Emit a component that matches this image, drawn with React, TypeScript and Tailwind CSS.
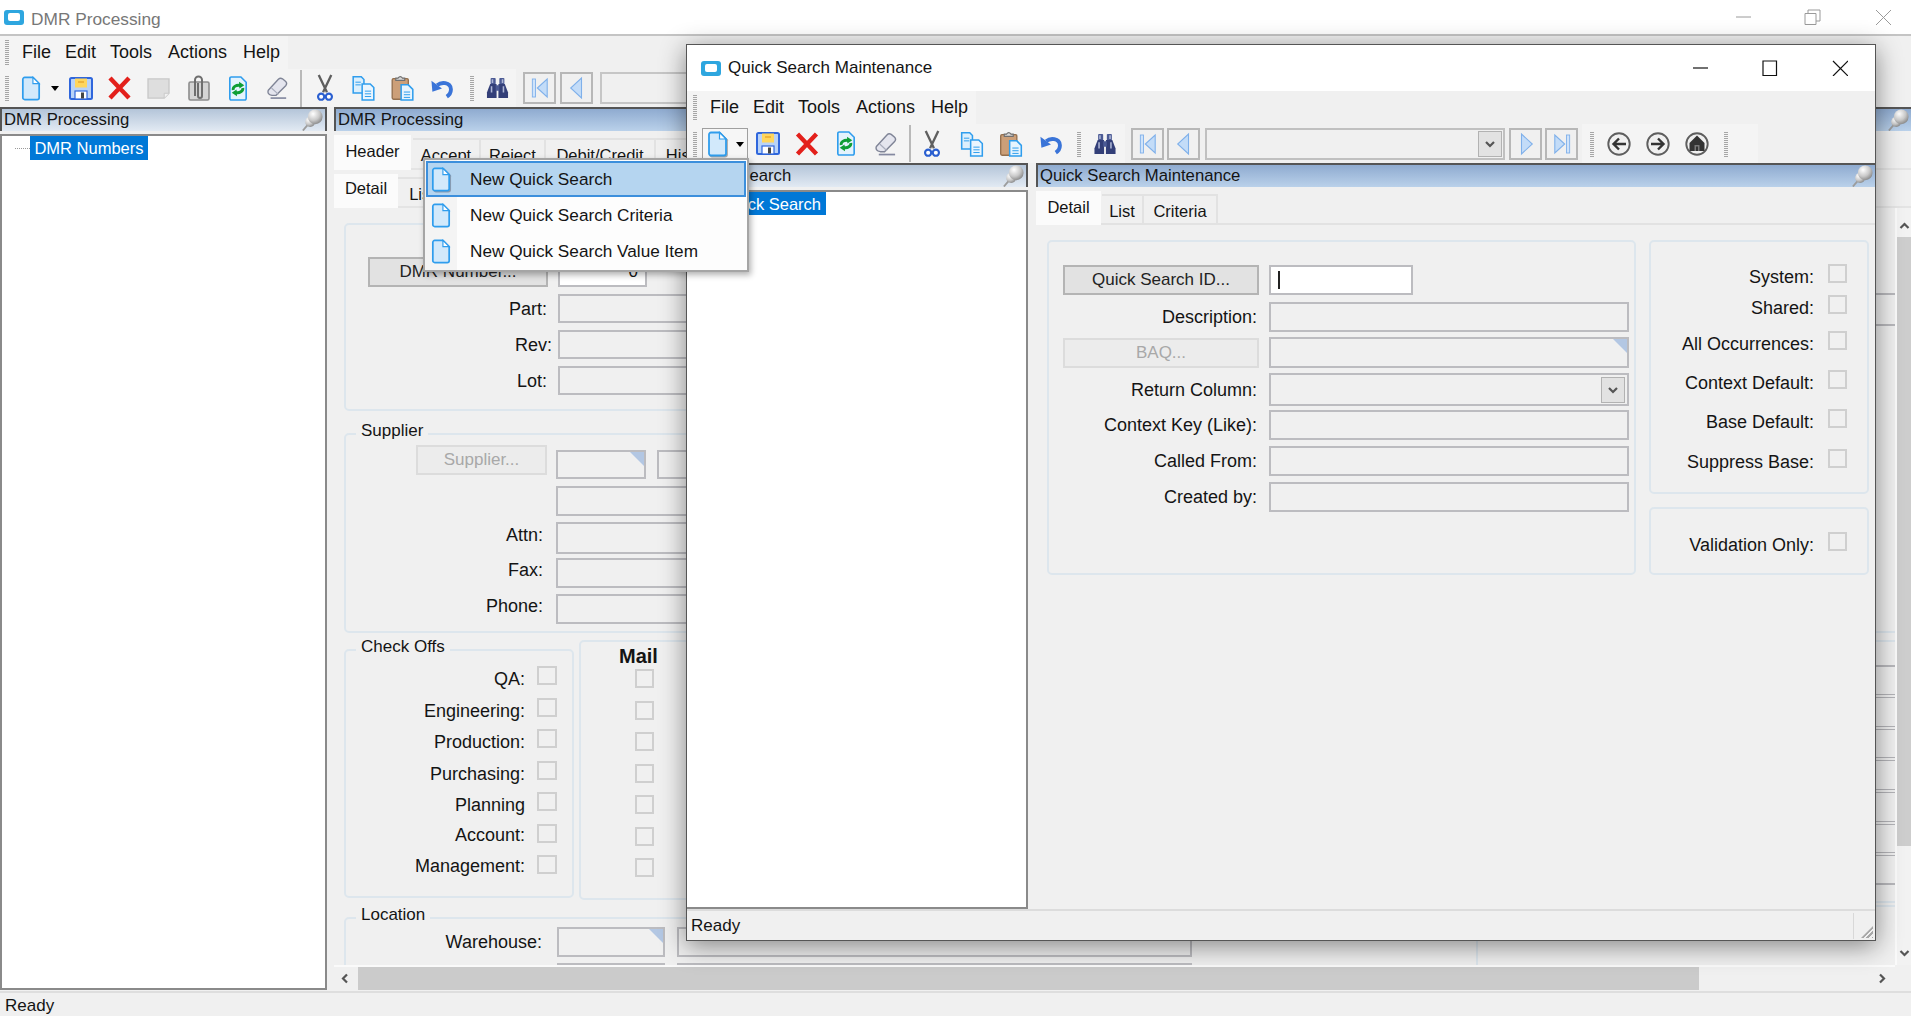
import React from "react";

type C = { className?: string };

const AppIcon = ({ className = "" }: C) => (
  <div className={"flex h-[15px] w-[20px] items-center justify-center rounded-[3px] bg-[#2ea6df] " + className}>
    <div className="h-[8px] w-[12px] rounded-[2px] bg-white" />
  </div>
);

const Doc = ({ className = "" }: C) => (
  <svg viewBox="0 0 20 26" className={className}>
    <path d="M1.500 3.500a2 2 0 0 1 2-2h8.500l6.500 6.500v14.500a2 2 0 0 1-2 2h-13a2 2 0 0 1-2-2z" fill="#d2e9fb" stroke="#2f9ded" strokeWidth="1.800" />
    <path d="M12 1.500V8h6.500z" fill="#fff" stroke="#2f9ded" strokeWidth="1.200" />
  </svg>
);
const Save = ({ className = "" }: C) => (
  <svg viewBox="0 0 24 23" className={className}>
    <rect x="1" y="1" width="22" height="21" rx="1.500" fill="#b9d3f7" stroke="#2f66dc" strokeWidth="2" />
    <rect x="6" y="1.500" width="12" height="9" fill="#ffd65c" />
    <path d="M9 5h6" stroke="#e8a72c" strokeWidth="1.400" />
    <rect x="6" y="14" width="12" height="8" fill="#fff" stroke="#2f66dc" strokeWidth="1.200" />
    <rect x="12" y="15.500" width="3" height="6" fill="#444" />
  </svg>
);
const Del = ({ className = "" }: C) => (
  <svg viewBox="0 0 24 24" className={className}>
    <path d="M2.500 2 21.500 22M21.500 2 2.500 22" stroke="#e3201b" strokeWidth="4.400" fill="none" />
  </svg>
);
const GrayBox = ({ className = "" }: C) => (
  <svg viewBox="0 0 24 22" className={className}>
    <path d="M1 1h22v15l-5 5H1z" fill="#dedede" stroke="#c8c8c8" strokeWidth="1.400" />
    <path d="M23 16h-5v5" fill="#f2f2f2" stroke="#c8c8c8" />
  </svg>
);
const Clip = ({ className = "" }: C) => (
  <svg viewBox="0 0 22 26" className={className}>
    <rect x="1" y="7" width="20" height="18" rx="1.500" fill="#d4d4d4" stroke="#8c8c8c" strokeWidth="1.600" />
    <path d="M7 21V5a3.500 3.500 0 0 1 7 0v16a2 2 0 0 1-4 0V8" fill="none" stroke="#6e6e6e" strokeWidth="2" />
  </svg>
);
const Refresh = ({ className = "" }: C) => (
  <svg viewBox="0 0 20 26" className={className}>
    <path d="M1.500 2.500a1.500 1.500 0 0 1 1.500-1.500h10l5.500 5.500v17a1.500 1.500 0 0 1-1.500 1.500H3a1.500 1.500 0 0 1-1.500-1.500z" fill="#e4f3fd" stroke="#2f9ded" strokeWidth="1.700" />
    <path d="M5 14.500c-.5-3 3.500-6 7.500-4.500" fill="none" stroke="#0f9e35" strokeWidth="3" />
    <path d="M11 6l5.500 3.500-5 3.500z" fill="#0f9e35" />
    <path d="M15 12.500c.5 3-3.500 6-7.500 4.500" fill="none" stroke="#0f9e35" strokeWidth="3" />
    <path d="M9 21l-5.500-3.500 5-3.500z" fill="#0f9e35" />
  </svg>
);
const Eraser = ({ className = "" }: C) => (
  <svg viewBox="0 0 24 25" className={className}>
    <path d="M2.500 15 13.500 3q2-2 4.500-.5l3.500 3q2 2 0 4.500L11 20.500H6.500Q1 19.500 2.500 15z" fill="#e4e5ee" stroke="#7f8496" strokeWidth="1.500" />
    <path d="M6 12.500l7.500 7" stroke="#a8acbc" strokeWidth="1.200" fill="none" />
    <path d="M5 23.500h17" stroke="#8489a0" strokeWidth="1.800" />
  </svg>
);
const Cut = ({ className = "" }: C) => (
  <svg viewBox="0 0 18 29" className={className}>
    <path d="M2.500 1 11 19M15.500 1 7 19" stroke="#5f5f5f" strokeWidth="2.400" fill="none" />
    <circle cx="5" cy="23.500" r="3.200" fill="#fff" stroke="#2a5fd0" strokeWidth="2.200" />
    <circle cx="13" cy="23.500" r="3.200" fill="#fff" stroke="#2a5fd0" strokeWidth="2.200" />
  </svg>
);
const Copy = ({ className = "" }: C) => (
  <svg viewBox="0 0 25 29" className={className}>
    <path d="M1 2h9l3 3v15H1z" fill="#dceffc" stroke="#2f9ded" strokeWidth="1.700" />
    <path d="M11 10h9l4 4v14H11z" fill="#eaf5fe" stroke="#2f9ded" strokeWidth="1.700" />
    <path d="M14 18h7M14 21h7M14 24h7M3.500 8h6M3.500 11h6" stroke="#2f9ded" strokeWidth="1.100" />
  </svg>
);
const Paste = ({ className = "" }: C) => (
  <svg viewBox="0 0 25 29" className={className}>
    <rect x="1" y="4" width="18" height="23" rx="1.500" fill="#cc9f78" stroke="#94704e" strokeWidth="1.500" />
    <path d="M5 6V3.500h2.500q2.500-3.500 5 0H15V6z" fill="#d9d9d9" stroke="#707070" strokeWidth="1.300" />
    <path d="M11 11h8l5 5v12H11z" fill="#e6f4fe" stroke="#2f9ded" strokeWidth="1.700" />
    <path d="M14 19h7M14 22h7M14 25h7" stroke="#2f9ded" strokeWidth="1.100" />
  </svg>
);
const Undo = ({ className = "" }: C) => (
  <svg viewBox="0 0 24 22" className={className}>
    <path d="M17.500 20c6-4 6-12.500-1.500-14-3-.5-6 0-8.500 2" fill="none" stroke="#3a74d8" strokeWidth="4" />
    <path d="M1.500 3.500l1 11.500 10-3.500z" fill="#3a74d8" />
  </svg>
);
const Binoc = ({ className = "" }: C) => (
  <svg viewBox="0 0 24 24" className={className}>
    <rect x="4.500" y="1" width="5.500" height="7" rx="1" fill="#4b5a94" />
    <rect x="14" y="1" width="5.500" height="7" rx="1" fill="#4b5a94" />
    <path d="M4 7.500h7V23H.5v-6z" fill="#333f78" />
    <path d="M20 7.500h-7V23h10.500v-6z" fill="#333f78" />
    <rect x="10" y="9" width="4" height="6" fill="#4b5a94" />
    <path d="M5.500 10v7M18.500 10v7M6.500 2.500v4M17.500 2.500v4" stroke="#aeb7d6" strokeWidth="1.700" />
  </svg>
);
const Tri = ({ dir, bar, className = "" }: C & { dir: "l" | "r"; bar?: boolean }) => (
  <svg viewBox="0 0 20 24" className={className}>
    <g transform={dir === "r" ? "translate(20 0) scale(-1 1)" : undefined}>
      {bar && <rect x="1.500" y="2" width="3.500" height="20" fill="#cfe3fa" stroke="#7fb0ea" strokeWidth="1" />}
      <path d={bar ? "M18 2v20L7 12z" : "M15 1v22L3 12z"} fill="#c3dcf8" stroke="#7fb0ea" strokeWidth="1.200" />
    </g>
  </svg>
);
const Ring = ({ kind, className = "" }: C & { kind: "b" | "f" | "h" }) => (
  <svg viewBox="0 0 24 24" className={className}>
    <circle cx="12" cy="12" r="10.700" fill="#f0f0f0" stroke="#5e5e5e" strokeWidth="1.900" />
    {kind === "b" && <path d="M19 12H7M12 6.500 6.500 12l5.500 5.500" fill="none" stroke="#333" strokeWidth="2.400" />}
    {kind === "f" && <path d="M5 12h12M12 6.500l5.500 5.500-5.500 5.500" fill="none" stroke="#333" strokeWidth="2.400" />}
    {kind === "h" && (
      <>
        <path d="M12 3.500l7.500 7.500v8h-15v-8z" fill="#333" />
        <rect x="9.500" y="13" width="5" height="6" fill="#777" />
        <rect x="11" y="14.500" width="2" height="4.500" fill="#333" />
      </>
    )}
  </svg>
);
const Pin = ({ className = "" }: C) => (
  <svg viewBox="0 0 24 24" className={className}>
    <defs>
      <radialGradient id="pg" cx="0.35" cy="0.3" r="0.8">
        <stop offset="0" stopColor="#ffffff" />
        <stop offset="0.55" stopColor="#c9c9c9" />
        <stop offset="1" stopColor="#7d7d7d" />
      </radialGradient>
    </defs>
    <path d="M1.500 23.500l6-7" stroke="#9c9c9c" strokeWidth="2" />
    <circle cx="9.500" cy="14" r="5.500" fill="url(#pg)" />
    <circle cx="15" cy="8.500" r="8" fill="url(#pg)" />
  </svg>
);
const Chev = ({ d, className = "" }: C & { d: string }) => (
  <svg viewBox="0 0 12 12" className={className}>
    <path d={d} fill="none" stroke="#555" strokeWidth="2.200" />
  </svg>
);

const Grip = ({ className = "" }: C) => (
  <div className={"h-[26px] w-[4px] shrink-0 bg-[repeating-linear-gradient(0deg,#a6a6a6_0_1px,transparent_1px_2px)] " + className} />
);
const Sep = ({ className = "" }: C) => <div className={"h-[37px] w-[2px] shrink-0 bg-[#b9b9b9] " + className} />;
const NavBtn = ({ children, className = "" }: React.PropsWithChildren<C>) => (
  <div className={"flex h-[32px] w-[33px] shrink-0 items-center justify-center border-2 border-[#b7b7b7] bg-[#f0f0f0] " + className}>{children}</div>
);
const Menu = ({ className = "" }: C) => (
  <div className="flex h-[33px] shrink-0 items-center bg-[#f0f0f0]">
    <div className={"flex h-full w-fit items-center bg-[#f4f4f4] pb-[1px] text-[18px] leading-[22px] " + className}>
      <Grip className="ml-[5px]" />
      <span className="ml-[13px]">File</span>
      <span className="ml-[14px]">Edit</span>
      <span className="ml-[14px]">Tools</span>
      <span className="ml-[16px]">Actions</span>
      <span className="ml-[16px] mr-[8px]">Help</span>
    </div>
  </div>
);

const Box = ({ className = "" }: C) => <div className={"h-[19px] w-[19px] shrink-0 border-2 border-[#cfcfcf] bg-[#f0f0f0] " + className} />;
const Corner = () => <div className="absolute right-0 top-0 h-[14px] w-[14px] bg-[#b3c7e3] [clip-path:polygon(0_0,100%_0,100%_100%)]" />;
const Inp = ({ className = "", corner, children, white }: React.PropsWithChildren<C & { corner?: boolean; white?: boolean }>) => (
  <div className={"relative shrink-0 border-2 border-[#bcbcc0] " + (white ? "bg-white " : "bg-[#f0f0f0] ") + className}>
    {corner && <Corner />}
    {children}
  </div>
);
const Btn = ({ className = "", children, disabled }: React.PropsWithChildren<C & { disabled?: boolean }>) => (
  <div
    className={
      "flex shrink-0 items-center justify-center border-2 leading-[20px] " +
      (disabled ? "border-[#dcdcdc] bg-[#ececec] text-[#a8a8a8] " : "border-[#b4b4b4] bg-[#e2e2e2] text-[#222] ") +
      className
    }
  >
    {children}
  </div>
);
const Legend = ({ children }: React.PropsWithChildren) => (
  <span className="absolute left-[10px] top-[-14px] bg-[#f0f0f0] px-[5px] text-[17px] leading-[20px]">{children}</span>
);
const Group = ({ className = "", children }: React.PropsWithChildren<C>) => (
  <div className={"relative shrink-0 rounded-[5px] border-2 border-[#dde6ed] " + className}>{children}</div>
);
const PanelHead = ({ title, strong, className = "", pinClass = "" }: C & { title: string; strong?: boolean; pinClass?: string }) => (
  <div
    className={
      "flex h-[24px] shrink-0 items-center justify-between overflow-hidden border-l-2 border-t-2 border-[#555] pl-[2px] text-[16.700px] leading-[20px] " +
      (strong ? "bg-gradient-to-b from-[#8fabd0] to-[#bad1ea] " : "bg-gradient-to-b from-[#b4c5d9] to-[#e2eaf3] ") +
      className
    }
  >
    <span className="whitespace-nowrap">{title}</span>
    <Pin className={"mr-[1px] h-[22px] w-[23px] shrink-0 " + pinClass} />
  </div>
);
const Tab = ({ label, active, className = "" }: C & { label: string; active?: boolean }) => (
  <div
    className={
      "flex shrink-0 items-center justify-center text-[16.500px] leading-[20px] " +
      (active ? "bg-[#fbfbfb] " : "mt-[3px] border-r-2 border-t-2 border-[#e2e2e2] pt-[1px] ") +
      className
    }
  >
    {label}
  </div>
);

const CheckRow = ({ label, labelClass = "mt-[3px]" }: { label: string; labelClass?: string }) => (
  <div className="flex h-[31.500px] items-start justify-end pr-[15px]">
    <span className={"mr-[12px] text-[18px] leading-[20px] " + labelClass}>{label}</span>
    <Box className="w-[20px]" />
  </div>
);
const LabelRow = ({
  label,
  children,
  className = "",
  labelW = "w-[202px]",
  labelClass = "",
}: React.PropsWithChildren<C & { labelW?: string; labelClass?: string }> & { label: string }) => (
  <div className={"flex items-center " + className}>
    <span className={"shrink-0 text-right text-[18px] leading-[20px] " + labelW + " " + labelClass}>{label}</span>
    {children}
  </div>
);

const QCheck = ({ label, className = "" }: C & { label: string }) => (
  <div className={"flex h-[20px] items-start justify-end pr-[20px] " + className}>
    <span className="mr-[14px] mt-[3px] text-[18px] leading-[20px]">{label}</span>
    <Box />
  </div>
);
const QLabel = ({ children }: React.PropsWithChildren) => (
  <span className="w-[194px] shrink-0 text-right text-[18px] leading-[20px]">{children}</span>
);
const Dbl = ({ className = "" }: C) => <div className={"h-[4px] w-full shrink-0 border-y border-[#b4b4b8] " + className} />;
const One = ({ className = "" }: C) => <div className={"h-[2px] w-full shrink-0 bg-[#b8b8bc] " + className} />;
const BlueLn = ({ className = "" }: C) => <div className={"h-[2px] w-full shrink-0 bg-[#dde6ed] " + className} />;

export default function App() {
  return (
    <div className="relative flex h-[1016px] w-[1911px] flex-col overflow-hidden bg-[#f0f0f0] font-['Liberation_Sans',sans-serif] text-[17px] leading-[20px] text-[#141414]">
      {/* outer title bar */}
      <div className="flex h-[36px] shrink-0 items-center border-b-2 border-[#c4c4c4] bg-white">
        <AppIcon className="ml-[4px]" />
        <span className="ml-[7px] pt-[3px] text-[17.300px] text-[#777]">DMR Processing</span>
        <svg viewBox="0 0 155 16" className="ml-auto mr-[20px] h-[16px] w-[155px]" fill="none" stroke="#9a9a9a" strokeWidth="1">
          <path d="M0 8h15" />
          <path d="M69 4.500h11v11H69zM72 4.500V1h12v11h-4" />
          <path d="M140 1l15 15M155 1l-15 15" />
        </svg>
      </div>
      <Menu />
      {/* outer toolbar */}
      <div className="flex h-[38px] shrink-0 items-center bg-[linear-gradient(90deg,#f4f4f4_0_516px,#f0f0f0_516px)]">
        <Grip className="ml-[5px]" />
        <Doc className="ml-[12px] h-[25px] w-[20px]" />
        <div className="ml-[10px] h-0 w-0 border-x-[4px] border-t-[5px] border-x-transparent border-t-black" />
        <Save className="ml-[10px] h-[23px] w-[24px]" />
        <Del className="ml-[14px] h-[24px] w-[25px]" />
        <GrayBox className="ml-[15px] h-[21px] w-[23px]" />
        <Clip className="ml-[18px] h-[26px] w-[22px]" />
        <Refresh className="ml-[18px] h-[25px] w-[20px]" />
        <Eraser className="ml-[18px] h-[24px] w-[22px]" />
        <Sep className="ml-[12px]" />
        <Cut className="ml-[14px] h-[28px] w-[18px]" />
        <Copy className="ml-[17px] h-[26px] w-[25px]" />
        <Paste className="ml-[14px] h-[26px] w-[25px]" />
        <Undo className="ml-[15px] h-[22px] w-[23px]" />
        <Grip className="ml-[17px]" />
        <Binoc className="ml-[12px] h-[22px] w-[23px]" />
        <NavBtn className="ml-[14px]"><Tri dir="l" bar className="h-[22px] w-[18px]" /></NavBtn>
        <NavBtn className="ml-[4px] w-[32px]"><Tri dir="l" className="h-[24px] w-[18px]" /></NavBtn>
        <div className="ml-[7px] h-[32px] w-[120px] border-2 border-[#c6c6c6]" />
      </div>

      {/* outer main */}
      <div className="flex min-h-0 flex-1">
        <div className="flex w-[327px] shrink-0 flex-col">
          <PanelHead title="DMR Processing" className="border-r-2" />
          <div className="mt-[3px] flex-1 border-x-2 border-y-2 border-[#8a8a8a] bg-white pt-0">
            <div className="flex h-[24px] items-center">
              <div className="ml-[13px] w-[15px] border-t border-dotted border-[#999]" />
              <div className="flex h-[24px] w-[118px] items-center justify-center bg-[#0078d7] text-[16.500px] text-white">DMR Numbers</div>
            </div>
          </div>
        </div>
        <div className="ml-[7px] flex min-w-0 flex-1 flex-col">
          <PanelHead title="DMR Processing" strong pinClass="-mr-[9px]" />
          <div className="mt-[4px] flex h-[35px] shrink-0 border-b-2 border-[#e4e4e4]">
            <Tab label="Header" active className="h-[35px] w-[77px] pb-[4px]" />
            <Tab label="Accept" className="ml-[2px] h-[31px] w-[68px]" />
            <Tab label="Reject" className="h-[31px] w-[65px]" />
            <Tab label="Debit/Credit" className="h-[31px] w-[110px]" />
            <Tab label="History" className="h-[31px] w-[73px]" />
          </div>
          <div className="mt-[4px] flex h-[34px] shrink-0 border-b-2 border-[#e4e4e4]">
            <Tab label="Detail" active className="h-[34px] w-[64px] pb-[6px]" />
            <Tab label="List" className="h-[31px] w-[50px]" />
          </div>
          <div className="flex min-h-0 flex-1">
            {/* form */}
            <div className="flex min-w-0 flex-1 flex-col overflow-hidden pl-[10px]">
              <Group className="mt-[15px] h-[188px] w-[1134px] pl-[22px] pt-[32px]">
                <div className="flex h-[30px] items-center">
                  <Btn className="h-[30px] w-[180px]">DMR Number...</Btn>
                  <Inp white className="ml-[10px] flex h-[30px] w-[89px] items-center justify-end pr-[7px]">0</Inp>
                </div>
                <LabelRow label="Part:" className="mt-[7px]" labelW="w-[179px]"><Inp className="ml-[11px] h-[29px] w-[400px]" /></LabelRow>
                <LabelRow label="Rev:" className="mt-[7px]" labelW="w-[184px]"><Inp className="ml-[6px] h-[29px] w-[400px]" /></LabelRow>
                <LabelRow label="Lot:" className="mt-[7px]" labelW="w-[179px]"><Inp className="ml-[11px] h-[29px] w-[400px]" /></LabelRow>
              </Group>
              <Group className="mt-[22px] h-[200px] w-[1134px] pl-[70px] pt-[10px]">
                <Legend>Supplier</Legend>
                <div className="flex items-start">
                  <Btn disabled className="h-[30px] w-[131px]">Supplier...</Btn>
                  <Inp corner className="ml-[9px] mt-[5px] h-[29px] w-[90px]" />
                  <Inp className="ml-[11px] mt-[5px] h-[29px] w-[300px]" />
                </div>
                <Inp className="ml-[140px] mt-[7px] h-[30px] w-[400px]" />
                <LabelRow label="Attn:" className="mt-[6px]" labelW="w-[127px]" labelClass="pb-[7px]"><Inp className="ml-[13px] h-[32px] w-[400px]" /></LabelRow>
                <LabelRow label="Fax:" className="mt-[4px]" labelW="w-[127px]" labelClass="pb-[6px]"><Inp className="ml-[13px] h-[30px] w-[400px]" /></LabelRow>
                <LabelRow label="Phone:" className="mt-[6px]" labelW="w-[127px]" labelClass="pb-[7px]"><Inp className="ml-[13px] h-[30px] w-[400px]" /></LabelRow>
              </Group>
              <div className="mt-[7px] flex shrink-0 items-start">
                <Group className="mt-[9px] h-[249px] w-[230px] pt-[15px]">
                  <Legend>Check Offs</Legend>
                  <CheckRow label="QA:" />
                  <CheckRow label="Engineering:" />
                  <CheckRow label="Production:" />
                  <CheckRow label="Purchasing:" />
                  <CheckRow label="Planning" />
                  <CheckRow label="Account:" labelClass="mt-[1px]" />
                  <CheckRow label="Management:" labelClass="mt-[1px]" />
                </Group>
                <Group className="ml-[5px] flex h-[260px] w-[200px] flex-col pt-[4px]">
                  <span className="ml-[38px] text-[20px] font-bold leading-[20px]">Mail</span>
                  <div className="ml-[54px] mt-[3px] flex flex-col gap-[12.500px]">
                    <Box /><Box /><Box /><Box /><Box /><Box /><Box />
                  </div>
                </Group>
              </div>
              <Group className="mt-[17px] h-[120px] w-[1134px] pt-[8px]">
                <Legend>Location</Legend>
                <LabelRow label="Warehouse:" labelW="w-[196px]">
                  <Inp corner className="ml-[15px] h-[30px] w-[108px]" />
                  <Inp className="ml-[12px] h-[30px] w-[515px]" />
                </LabelRow>
                <div className="mt-[6px] flex pl-[211px]">
                  <Inp corner className="h-[30px] w-[108px]" />
                  <Inp className="ml-[12px] h-[30px] w-[515px]" />
                </div>
              </Group>
            </div>
            {/* far-right edge of the form fields */}
            <div className="flex w-[19px] shrink-0 flex-col">
              <One className="mt-[85px]" />
              <One className="mt-[29px]" />
              <BlueLn className="mt-[305px]" />
              <BlueLn className="mt-[7px]" />
              <One className="mt-[23px]" />
              <Dbl className="mt-[27px]" />
              <Dbl className="mt-[28px]" />
              <Dbl className="mt-[27px]" />
              <Dbl className="mt-[28px]" />
              <Dbl className="mt-[28px]" />
              <Dbl className="mt-[27px]" />
              <One className="mt-[27px]" />
              <BlueLn className="mt-[16px]" />
              <BlueLn className="mt-[2px]" />
            </div>
            {/* vertical scrollbar */}
            <div className="flex w-[16px] shrink-0 flex-col items-center border-l-2 border-[#fafafa] bg-[#f2f2f2] pt-[12px]">
              <Chev d="M2 8l4-4 4 4" className="h-[12px] w-[13px]" />
              <div className="mt-[5px] h-[609px] w-full bg-[#cdcdcd]" />
              <Chev d="M2 4l4 4 4-4" className="mt-[101px] h-[12px] w-[13px]" />
            </div>
          </div>
          {/* horizontal scrollbar */}
          <div className="mr-[16px] flex h-[25px] shrink-0 items-center border-t-2 border-[#fafafa]">
            <Chev d="M8 2L4 6l4 4" className="ml-[5px] h-[13px] w-[12px] shrink-0" />
            <div className="ml-[7px] h-full w-[1341px] bg-[#cbcbcb]" />
            <Chev d="M4 2l4 4-4 4" className="ml-auto mr-[7px] h-[13px] w-[12px] shrink-0" />
          </div>
        </div>
      </div>
      {/* outer status */}
      <div className="mt-[1px] flex h-[25px] shrink-0 items-center border-t-2 border-[#dedede] pl-[5px] pt-[2px]">Ready</div>

      {/* Quick Search window */}
      <div className="absolute left-[686px] top-[44px] z-10 flex h-[897px] w-[1190px] flex-col border border-[#555] bg-[#f0f0f0] shadow-[0_5px_24px_rgba(0,0,0,0.45)]">
        <div className="flex h-[46px] shrink-0 items-center bg-white">
          <AppIcon className="ml-[14px]" />
          <span className="ml-[7px]">Quick Search Maintenance</span>
          <svg viewBox="0 0 155 16" className="ml-auto mr-[27px] h-[16px] w-[155px]" fill="none" stroke="#111" strokeWidth="1.200">
            <path d="M0 8h15" />
            <path d="M70 1h13.500v14.500H70z" />
            <path d="M140 1l15 15M155 1l-15 15" />
          </svg>
        </div>
        <Menu className="pl-[1px]" />
        <div className="flex h-[39px] shrink-0 items-center bg-[linear-gradient(90deg,#f4f4f4_0_438px,#f0f0f0_438px_895px,#f4f4f4_895px_1071px,#f0f0f0_1071px)]">
          <Grip className="ml-[6px]" />
          <div className="ml-[5px] flex h-[32px] w-[46px] items-center border border-b-0 border-[#9f9f9f] bg-[#f6f6f6]">
            <Doc className="ml-[4px] h-[26px] w-[21px] [filter:drop-shadow(1px_1px_0_#a8a8a8)]" />
            <div className="ml-[8px] h-0 w-0 border-x-[4px] border-t-[5px] border-x-transparent border-t-black" />
          </div>
          <Save className="ml-[8px] h-[23px] w-[24px]" />
          <Del className="ml-[15px] h-[24px] w-[24px]" />
          <Refresh className="ml-[17px] h-[25px] w-[20px]" />
          <Eraser className="ml-[18px] h-[24px] w-[23px]" />
          <Sep className="ml-[12px]" />
          <Cut className="ml-[12px] h-[28px] w-[18px]" />
          <Copy className="ml-[19px] h-[26px] w-[24px]" />
          <Paste className="ml-[15px] h-[26px] w-[24px]" />
          <Undo className="ml-[16px] h-[22px] w-[23px]" />
          <Grip className="ml-[15px]" />
          <Binoc className="ml-[12px] h-[22px] w-[24px]" />
          <NavBtn className="ml-[14px]"><Tri dir="l" bar className="h-[22px] w-[18px]" /></NavBtn>
          <NavBtn className="ml-[3px]"><Tri dir="l" className="h-[24px] w-[18px]" /></NavBtn>
          <div className="ml-[5px] flex h-[32px] w-[300px] items-center justify-end border-2 border-[#c0c0c0] pr-[1px]">
            <div className="flex h-[26px] w-[24px] items-center justify-center border border-[#b2b2b2] bg-[#e2e2e2]">
              <Chev d="M2 4l4 4 4-4" className="h-[12px] w-[12px]" />
            </div>
          </div>
          <NavBtn className="ml-[4px]"><Tri dir="r" className="h-[24px] w-[18px]" /></NavBtn>
          <NavBtn className="ml-[3px]"><Tri dir="r" bar className="h-[22px] w-[18px]" /></NavBtn>
          <Grip className="ml-[12px]" />
          <Ring kind="b" className="ml-[13px] h-[24px] w-[24px]" />
          <Ring kind="f" className="ml-[15px] h-[24px] w-[24px]" />
          <Ring kind="h" className="ml-[15px] h-[24px] w-[24px]" />
          <Grip className="ml-[15px]" />
        </div>
        <div className="flex min-h-0 flex-1">
          <div className="flex w-[341px] shrink-0 flex-col">
            <PanelHead title="Quick Search" className="border-r-2" />
            <div className="mt-[3px] flex-1 border-b-2 border-r-2 border-t-2 border-[#8a8a8a] bg-white">
              <div className="ml-[30px] flex h-[23px] w-[109px] items-center justify-center bg-[#0078d7] text-[16.500px] text-white">Quick Search</div>
            </div>
          </div>
          <div className="ml-[8px] flex min-w-0 flex-1 flex-col">
            <PanelHead title="Quick Search Maintenance" strong />
            <div className="mt-[4px] flex h-[34px] shrink-0 border-b-2 border-[#e2e2e2]">
              <Tab label="Detail" active className="h-[34px] w-[65px] pb-[2px]" />
              <Tab label="List" className="ml-[1px] h-[30px] w-[42px]" />
              <Tab label="Criteria" className="h-[30px] w-[74px]" />
            </div>
            <div className="flex items-start pl-[11px] pt-[15px]">
              <Group className="h-[335px] w-[589px] pl-[14px] pt-[23px]">
                <div className="flex items-center">
                  <Btn className="h-[30px] w-[196px]">Quick Search ID...</Btn>
                  <Inp white className="ml-[10px] flex h-[30px] w-[144px] items-center pl-[7px]">
                    <div className="h-[18px] w-[2px] bg-[#222]" />
                  </Inp>
                </div>
                <div className="mt-[7px] flex items-center">
                  <QLabel>Description:</QLabel>
                  <Inp className="ml-[12px] h-[30px] w-[360px]" />
                </div>
                <div className="mt-[5px] flex items-center">
                  <Btn disabled className="h-[30px] w-[196px]">BAQ...</Btn>
                  <Inp corner className="ml-[10px] h-[31px] w-[360px]" />
                </div>
                <div className="mt-[5px] flex items-center">
                  <QLabel>Return Column:</QLabel>
                  <Inp className="ml-[12px] flex h-[33px] w-[360px] items-center justify-end pr-[2px]">
                    <div className="flex h-[26px] w-[24px] items-center justify-center border border-[#b2b2b2] bg-[#e2e2e2]">
                      <Chev d="M2 4l4 4 4-4" className="h-[12px] w-[12px]" />
                    </div>
                  </Inp>
                </div>
                <div className="mt-[4px] flex items-center">
                  <QLabel>Context Key (Like):</QLabel>
                  <Inp className="ml-[12px] h-[30px] w-[360px]" />
                </div>
                <div className="mt-[6px] flex items-center">
                  <QLabel>Called From:</QLabel>
                  <Inp className="ml-[12px] h-[30px] w-[360px]" />
                </div>
                <div className="mt-[6px] flex items-center">
                  <QLabel>Created by:</QLabel>
                  <Inp className="ml-[12px] h-[30px] w-[360px]" />
                </div>
              </Group>
              <div className="ml-[13px] flex flex-col">
                <Group className="h-[254px] w-[220px] pt-[22px]">
                  <QCheck label="System:" />
                  <QCheck label="Shared:" className="mt-[11px]" />
                  <QCheck label="All Occurrences:" className="mt-[16px]" />
                  <QCheck label="Context Default:" className="mt-[19px]" />
                  <QCheck label="Base Default:" className="mt-[19px]" />
                  <QCheck label="Suppress Base:" className="mt-[20px]" />
                </Group>
                <Group className="mt-[13px] h-[68px] w-[220px] pt-[23px]">
                  <QCheck label="Validation Only:" />
                </Group>
              </div>
            </div>
          </div>
        </div>
        <div className="relative flex h-[31px] shrink-0 items-center border-t-2 border-[#dcdcdc] pl-[4px]">
          Ready
          <div className="ml-auto mr-[21px] h-[26px] w-px bg-[#d8d8d8]" />
          <div className="absolute bottom-[2px] right-[2px] h-[12px] w-[12px] bg-[repeating-linear-gradient(135deg,#a8a8a8_0_2px,transparent_2px_4px)] [clip-path:polygon(100%_0,100%_100%,0_100%)]" />
        </div>
      </div>

      {/* dropdown menu */}
      <div className="absolute left-[423px] top-[158px] z-20 flex h-[114px] w-[326px] flex-col border-2 border-[#a5a5a5] bg-[linear-gradient(90deg,#f4f4f4_0_32px,#fdfdfd_32px)] p-px text-[17.200px] shadow-[2px_3px_6px_rgba(0,0,0,0.3)]">
        <div className="flex h-[36px] items-center border-2 border-[#3c8fdc] bg-[#b5d5f0]">
          <Doc className="ml-[3px] h-[25px] w-[20px] [filter:drop-shadow(1px_1px_0_#8a9bb0)]" />
          <span className="ml-[19px]">New Quick Search</span>
        </div>
        <div className="flex h-[36px] items-center pl-[2px]">
          <Doc className="ml-[3px] h-[25px] w-[20px]" />
          <span className="ml-[19px]">New Quick Search Criteria</span>
        </div>
        <div className="flex h-[36px] items-center pl-[2px]">
          <Doc className="ml-[3px] h-[25px] w-[20px]" />
          <span className="ml-[19px]">New Quick Search Value Item</span>
        </div>
      </div>
    </div>
  );
}
